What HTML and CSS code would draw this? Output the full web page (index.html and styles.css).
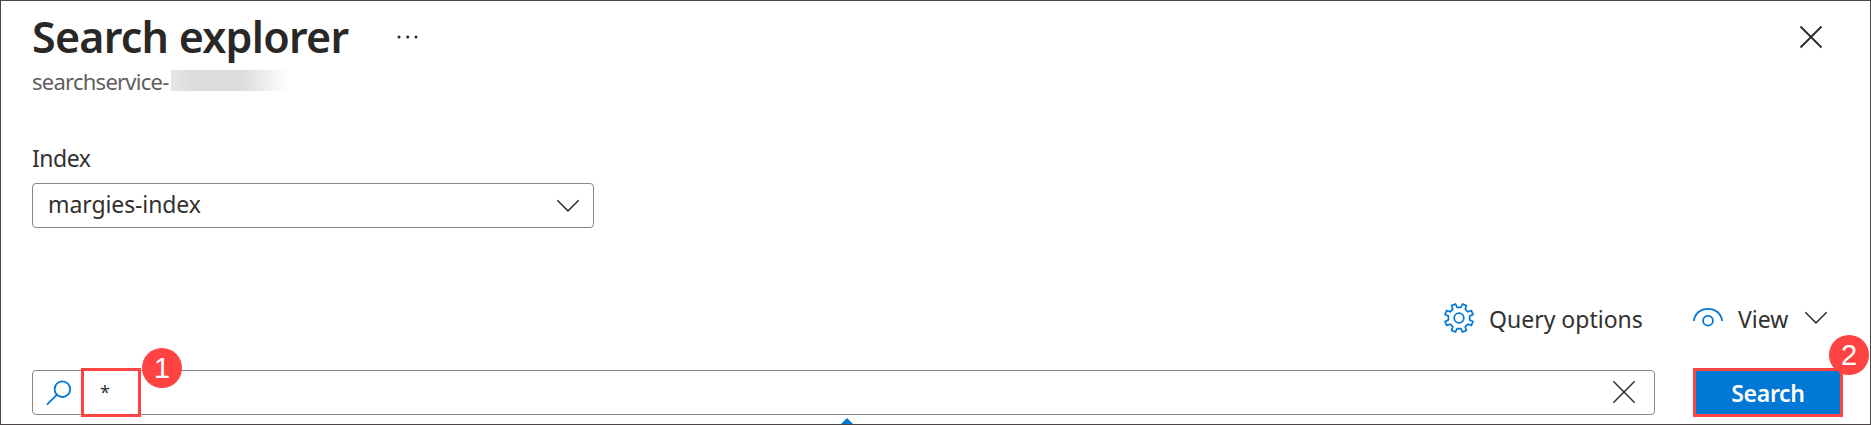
FILE: index.html
```html
<!DOCTYPE html>
<html lang="en">
<head>
<meta charset="utf-8">
<title>Search explorer</title>
<link rel="stylesheet" href="styles.css">
</head>
<body>
<main class="blade">
  <header class="header">
    <h1 class="title">Search explorer</h1>
    <svg class="more" width="22" height="4" viewBox="0 0 22 4"><g fill="#292827"><circle cx="2" cy="2" r="1.5"/><circle cx="10.7" cy="2" r="1.5"/><circle cx="19" cy="2" r="1.5"/></g></svg>
    <svg class="close" width="24" height="24" viewBox="0 0 24 24"><path d="M1.5 1.5L22.5 22.5M22.5 1.5L1.5 22.5" stroke="#292827" stroke-width="1.8"/></svg>
  </header>
  <div class="subtitle"><span class="service">searchservice-</span><span class="redacted"></span></div>
  <label class="label"><span class="label-text">Index</span></label>
  <div class="select">
    <span class="value">margies-index</span>
    <svg width="24" height="14" viewBox="0 0 24 14"><path d="M1.3 1.2L12 11.9L22.7 1.2" fill="none" stroke="#323130" stroke-width="1.5"/></svg>
  </div>
  <div class="toolbar">
    <svg class="gear" width="32" height="32" viewBox="-16 -16 32 32"><g fill="none" stroke="#0078d4" stroke-width="1.7" stroke-linejoin="round"><path d="M-3.5-14L-1.9-10.6H1.9L3.5-14L7.4-12.4L6.2-8.8L8.8-6.2L12.4-7.4L14-3.5L10.6-1.9V1.9L14 3.5L12.4 7.4L8.8 6.2L6.2 8.8L7.4 12.4L3.5 14L1.9 10.6H-1.9L-3.5 14L-7.4 12.4L-6.2 8.8L-8.8 6.2L-12.4 7.4L-14 3.5L-10.6 1.9V-1.9L-14-3.5L-12.4-7.4L-8.8-6.2L-6.2-8.8L-7.4-12.4Z"/><circle r="4.8"/></g></svg>
    <span class="query">Query options</span>
    <svg class="eye" width="32" height="20" viewBox="0 0 32 20"><g fill="none" stroke="#0078d4" stroke-width="1.8"><path d="M1.8 14C2.8 6.3 8.6 1.8 16 1.8S29.2 6.3 30.2 14"/><circle cx="16" cy="13.7" r="4.9"/></g></svg>
    <span class="view">View</span>
    <svg class="view-arrow" width="24" height="14" viewBox="0 0 24 14"><path d="M1.3 1.2L12 11.9L22.7 1.2" fill="none" stroke="#323130" stroke-width="1.5"/></svg>
  </div>
  <div class="search-row">
    <div class="search-box">
      <svg width="26" height="26" viewBox="0 0 26 26"><g fill="none" stroke="#0078d4" stroke-width="1.8"><circle cx="16.4" cy="9.2" r="7.8"/><path d="M11 14.7L1 24.7"/></g></svg>
      <span class="star">*</span>
      <svg class="clear" width="24" height="24" viewBox="0 0 24 24"><path d="M1.3 1.3L22.7 22.7M22.7 1.3L1.3 22.7" stroke="#323130" stroke-width="1.5"/></svg>
      <span class="highlight"></span>
      <span class="badge badge-one">1</span>
      <span class="pointer"></span>
    </div>
    <div class="button"><span class="button-text">Search</span><span class="badge badge-two">2</span></div>
  </div>
</main>
</body>
</html>
```
FILE: styles.css
```css
* { box-sizing: border-box; }
body { margin: 0; background: #fff; }
.blade {
  width: 1871px; height: 425px; padding: 0 27px 0 31px; overflow: hidden;
  border: 1px solid #4b4446;
  font-family: "Noto Sans", "Open Sans", sans-serif;
  font-size: 23px; line-height: 30px; color: #323130; white-space: nowrap;
}
svg { display: block; flex: none; }
.header { display: flex; align-items: center; height: 72px; }
.title { margin: 0; width: 365px; font-size: 43px; line-height: 60px; font-weight: 600; letter-spacing: -0.75px; color: #292827; }
.close { margin-left: auto; margin-right: 20px; }
.subtitle { display: flex; align-items: center; height: 16px; color: #605e5c; }
.service { width: 139px; font-size: 22px; letter-spacing: -0.75px; }
.redacted { width: 117px; height: 21px; margin-bottom: 1px; background: linear-gradient(90deg, #e6e6e6, #dcdcdc 20%, #dcdcdc 60%, #fff); }
.label { display: block; padding-top: 54px; height: 94px; letter-spacing: -0.5px; }
.select {
  display: flex; align-items: center; justify-content: space-between;
  width: 562px; height: 45px; padding: 0 13px 0 15px;
  border: 1px solid #8a8886; border-radius: 4px;
}
.value { margin-bottom: 3px; letter-spacing: -0.1px; }
.toolbar { display: flex; align-items: center; height: 60px; margin-top: 61px; padding-left: 1411px; }
.gear, .eye, .view-arrow { margin-bottom: 2px; }
.query { width: 152px; margin-left: 14px; margin-bottom: 1px; }
.eye { margin-left: 51px; margin-bottom: 4px; }
.view { width: 52px; margin-left: 14px; margin-bottom: 1px; }
.view-arrow { margin-left: 14px; }
.search-row { display: flex; align-items: center; gap: 38px; height: 49px; margin-top: 19px; }
.search-box {
  position: relative; display: flex; align-items: center;
  width: 1623px; height: 45px; padding: 0 18px 0 13px;
  border: 1px solid #8a8886; border-radius: 4px;
}
.star { margin-left: 28px; margin-bottom: 1px; font-size: 18px; }
.clear { margin-left: auto; margin-bottom: 1px; }
.button {
  position: relative; display: flex; align-items: center; justify-content: center;
  width: 150px; height: 49px; border: 3px solid #ff4343; background: #0078d4;
  color: #fff; font-weight: 600; letter-spacing: -0.3px;
}
.highlight { position: absolute; left: 48px; top: -3px; width: 60px; height: 49px; border: 3px solid #ff4343; }
.badge {
  position: absolute; width: 40px; height: 40px; border-radius: 50%; background: #ff4343;
  color: #fff; font: 400 29px/40px "Liberation Sans", Arial, sans-serif; letter-spacing: 0; text-align: center;
}
.badge-one { left: 109px; top: -23px; }
.badge-two { left: 133px; top: -36px; }
.pointer { position: absolute; left: 808px; top: 47px; border: 6px solid transparent; border-top: 0; border-bottom-color: #0078d4; }
```
